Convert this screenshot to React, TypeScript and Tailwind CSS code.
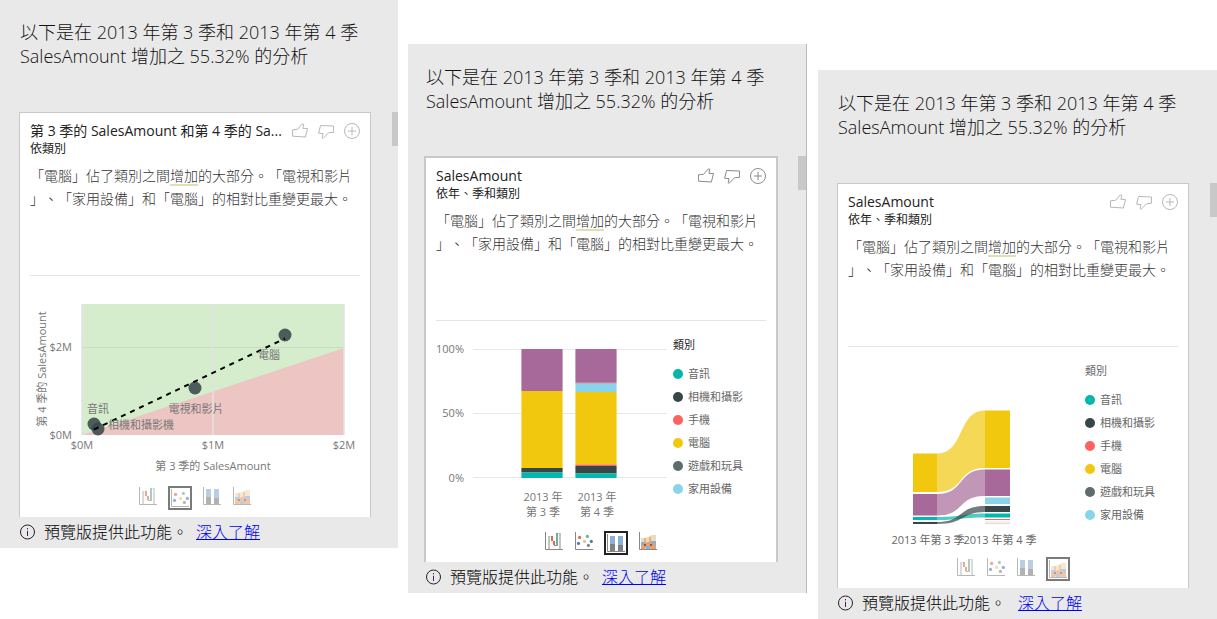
import type { ReactNode } from "react";

type ChartKind = "waterfall" | "scatter" | "stacked" | "ribbon";

const chartKinds: { kind: ChartKind; label: string }[] = [
  { kind: "waterfall", label: "瀑布圖" },
  { kind: "scatter", label: "散佈圖" },
  { kind: "stacked", label: "100% 堆疊直條圖" },
  { kind: "ribbon", label: "功能區圖表" },
];

const categories = [
  { name: "音訊", dot: "bg-[#01b8aa]" },
  { name: "相機和攝影", dot: "bg-[#374649]" },
  { name: "手機", dot: "bg-[#fd625e]" },
  { name: "電腦", dot: "bg-[#f2c80f]" },
  { name: "遊戲和玩具", dot: "bg-[#5f6b6d]" },
  { name: "家用設備", dot: "bg-[#8ad4eb]" },
];

function ThumbUpIcon() {
  return (
    <svg width="16" height="16" viewBox="0 0 16 16" fill="none" stroke="#8a8a8a">
      <path d="M.5 6.8 5.6 6.3 10.2.9 11.8 1.2 10.9 5.3 15.5 5.6 13.4 14 .6 13.2Z" />
    </svg>
  );
}

function ThumbDownIcon() {
  return (
    <svg width="16" height="16" viewBox="0 0 16 16" fill="none" stroke="#8a8a8a">
      <path d="M2.6 2.5 15.5 3 15.4 9.4 10.6 9.7 5.2 15.3 4.2 14.7 5 10.6.6 10.2Z" />
    </svg>
  );
}

function AddIcon() {
  return (
    <svg width="16" height="16" viewBox="0 0 16 16" fill="none" stroke="#8a8a8a">
      <circle cx="8" cy="8" r="7.5" />
      <path d="M8 4v8M4 8h8" />
    </svg>
  );
}

function InfoIcon() {
  return (
    <svg width="16" height="16" viewBox="0 0 16 16" fill="none" stroke="#222">
      <circle cx="7.5" cy="8" r="7" />
      <path d="M7.5 6.8V12M7.5 4v1.4" stroke="#4a1a5c" />
    </svg>
  );
}

function ChartIcon({ kind }: { kind: ChartKind }) {
  return (
    <svg width="18" height="18" viewBox="0 0 18 18">
      {kind === "waterfall" && (
        <>
          <path d="M3 4h2v13H3zM14 1h2v16h-2z" fill="#c4c4c4" />
          <path d="M5 4h2v.6H5zM13 1h2v.8h-2z" fill="#c4c4c4" />
          <path d="M6 4h2v5h2v4h1v1H9v-1H8V9H6z" fill="#dd6b50" />
          <path d="M11 1h2v13h-2z" fill="#73ad9b" />
        </>
      )}
      {kind === "scatter" && (
        <>
          <circle cx="4.6" cy="5.4" r="1.6" fill="#dd6b50" />
          <circle cx="12.4" cy="4.4" r="1.6" fill="#73ad9b" />
          <circle cx="9.5" cy="9.4" r="1.6" fill="#eac282" />
          <circle cx="3.5" cy="11.4" r="1.6" fill="#4a7ebf" />
          <circle cx="16.3" cy="9.4" r="1.6" fill="#4a7ebf" />
          <circle cx="13.4" cy="13.4" r="1.6" fill="#858585" />
        </>
      )}
      {kind === "stacked" && (
        <>
          <path d="M3 2h5v8H3zM11 2h5v9h-5z" fill="#8cafd5" />
          <path d="M3 10h5v7H3zM11 11h5v6h-5z" fill="#808080" />
        </>
      )}
      {kind === "ribbon" && (
        <>
          <path d="M2 6h4l3-1 4-2h4v7H2z" fill="#f1dab8" />
          <path d="M5 6h2v5H5zM10 5h2v5h-2z" fill="#dcb489" />
          <path d="M2 10h4l3 3 3-4h5v4h-3l-3 4H8l-3-4H2z" fill="#8cafd5" />
          <path d="M2 13h3l3-3h4l2 3h3v4h-5l-3-3-3 3H2z" fill="#ec9f68" />
          <path d="M5 12h2v2H5zM11 12h2v2h-2z" fill="#8c5648" />
          <path d="M7 14h4v3H7z" fill="#8cafd5" />
        </>
      )}
      <path d="M.5 0v17.5H18" fill="none" stroke="#888" />
    </svg>
  );
}

function ScatterChart() {
  return (
    <svg width="330" height="210" viewBox="0 0 330 210" className="block text-[11px]" fill="#777">
      <rect x="52" y="28" width="262" height="131" fill="#d6edcd" />
      <path d="M52 159 314 72V159Z" fill="#edc6c3" />
      <path d="M52 71.5H314" stroke="#c5dcbf" />
      <path d="M52 28v131M183 28v131M314 28v131" stroke="#e2e2e2" strokeWidth="1.5" />
      <g fill="#374649" fillOpacity=".87">
        <circle cx="255" cy="59" r="6.5" />
        <circle cx="165" cy="112" r="6.5" />
        <circle cx="64" cy="148" r="6.5" />
        <circle cx="68" cy="153" r="6.5" />
      </g>
      <path d="M64 153.5 255 62.5" stroke="#000" strokeWidth="2" strokeDasharray="5 5" />
      <g textAnchor="middle">
        <text x="239" y="83">電腦</text>
        <text x="166" y="137">電視和影片</text>
        <text x="68" y="137">音訊</text>
        <text x="111" y="153">相機和攝影機</text>
        <text x="52" y="173">$0M</text>
        <text x="183" y="173">$1M</text>
        <text x="314" y="173">$2M</text>
        <text x="183" y="194">第 3 季的 SalesAmount</text>
        <text transform="translate(16 93) rotate(-90)">第 4 季的 SalesAmount</text>
      </g>
      <g textAnchor="end">
        <text x="42" y="75">$2M</text>
        <text x="42" y="163">$0M</text>
      </g>
    </svg>
  );
}

function StackedChart() {
  return (
    <svg width="232" height="210" viewBox="0 0 232 210" className="block shrink-0 text-[11px]" fill="#777">
      <path d="M37 28.5H231M37 92.5H231M37 156.5H231" stroke="#e8e8e8" />
      <g>
        <rect x="85" y="28" width="42" height="42" fill="#a66999" />
        <rect x="85" y="70" width="42" height="77" fill="#f2c80f" />
        <rect x="85" y="147" width="42" height="4.5" fill="#374649" />
        <rect x="85" y="151.5" width="42" height="5.5" fill="#01b8aa" />
      </g>
      <g>
        <rect x="139" y="28" width="42" height="34" fill="#a66999" />
        <rect x="139" y="62" width="42" height="9" fill="#8ad4eb" />
        <rect x="139" y="61.5" width="42" height="1" fill="#d89aa8" />
        <rect x="139" y="71" width="42" height="72.5" fill="#f2c80f" />
        <rect x="139" y="143.5" width="42" height="1.5" fill="#fd625e" />
        <rect x="139" y="145" width="42" height="7.5" fill="#374649" />
        <rect x="139" y="152.5" width="42" height="4.5" fill="#01b8aa" />
      </g>
      <path d="M85.5 28v129M126.5 28v129M139.5 28v129M180.5 28v129" stroke="#fff" strokeOpacity=".4" />
      <g textAnchor="end">
        <text x="28" y="32">100%</text>
        <text x="28" y="96">50%</text>
        <text x="28" y="161">0%</text>
      </g>
      <g textAnchor="middle">
        <text x="107" y="180">2013 年</text>
        <text x="107" y="195">第 3 季</text>
        <text x="161" y="180">2013 年</text>
        <text x="161" y="195">第 4 季</text>
      </g>
    </svg>
  );
}

function RibbonChart() {
  return (
    <svg width="232" height="210" viewBox="0 0 232 210" className="block shrink-0 text-[11px]" fill="#666">
      <g fillOpacity=".7">
        <path d="M89 106.5C117 106.5 109 63.5 137 63.5V121C109 121 117 145 89 145Z" fill="#f2c80f" />
        <path d="M89 147C117 147 109 122.5 137 122.5V149C109 149 117 168.5 89 168.5Z" fill="#a66999" />
        <path d="M89 170C113 170 113 166.5 137 166.5V170.5C113 170.5 113 173 89 173Z" fill="#01b8aa" />
        <path d="M89 175C117 175 109 159 137 159V165C113 165 117 177 89 177Z" fill="#374649" />
      </g>
      <rect x="65" y="106.5" width="24" height="38.5" fill="#f2c80f" />
      <rect x="65" y="147" width="24" height="21.5" fill="#a66999" />
      <rect x="65" y="170" width="24" height="3" fill="#01b8aa" />
      <rect x="65" y="175" width="24" height="2" fill="#374649" />
      <rect x="137" y="63.5" width="25" height="57.5" fill="#f2c80f" />
      <rect x="137" y="122.5" width="25" height="26.5" fill="#a66999" />
      <rect x="137" y="150.5" width="25" height="6.5" fill="#8ad4eb" />
      <rect x="137" y="159" width="25" height="6" fill="#374649" />
      <rect x="137" y="166.5" width="25" height="4" fill="#01b8aa" />
      <rect x="137" y="172" width="25" height="1" fill="#fd625e" />
      <rect x="137" y="174" width="25" height="2" fill="#fbeee8" />
      <rect x="137" y="176" width="25" height="1" fill="#dcdcdc" />
      <g textAnchor="middle">
        <text x="80" y="197">2013 年第 3 季</text>
        <text x="152" y="197">2013 年第 4 季</text>
      </g>
    </svg>
  );
}

function Legend({ titleClass }: { titleClass: string }) {
  return (
    <div className="pt-[15px] pl-[5px] text-[11px]">
      <p className={`leading-[18px] ${titleClass}`}>類別</p>
      <ul className="mt-2 text-[#666]">
        {categories.map((category) => (
          <li key={category.name} className="flex items-center gap-[5px] leading-[23px]">
            <span className={`size-[10px] rounded-full ${category.dot}`} />
            {category.name}
          </li>
        ))}
      </ul>
    </div>
  );
}

interface AnalysisPanelProps {
  title: string;
  subtitle: string;
  selected: ChartKind;
  panelClass: string;
  headingClass: string;
  bodyClass: string;
  cardClass: string;
  thumbClass: string;
  footerClass: string;
  linkClass: string;
  active?: boolean;
  children: ReactNode;
}

function AnalysisPanel({
  title,
  subtitle,
  selected,
  panelClass,
  headingClass,
  bodyClass,
  cardClass,
  thumbClass,
  footerClass,
  linkClass,
  active = false,
  children,
}: AnalysisPanelProps) {
  return (
    <section className={`bg-[#e9e9e9] ${panelClass}`}>
      <h2 className={`text-[18px] leading-6 font-light text-[#111] ${headingClass}`}>
        以下是在 2013 年第 3 季和 2013 年第 4 季
        <br />
        SalesAmount 增加之 55.32% 的分析
      </h2>
      <div className={`flex items-start ${bodyClass}`}>
        <article className={`min-w-0 flex-1 border-[#c8c8c8] bg-white px-[10px] pt-[7px] pb-[7px] ${cardClass}`}>
          <header className="flex items-start justify-between whitespace-nowrap">
            <div>
              <h3 className="text-[14px] leading-[22px] text-[#222]">{title}</h3>
              <p className="text-[12px] leading-[14px] text-[#222]">{subtitle}</p>
            </div>
            <div className={`flex gap-[10px] pt-[3px] ${active ? "" : "opacity-60"}`}>
              <button type="button" aria-label="讚">
                <ThumbUpIcon />
              </button>
              <button type="button" aria-label="不讚">
                <ThumbDownIcon />
              </button>
              <button type="button" aria-label="新增至報表">
                <AddIcon />
              </button>
            </div>
          </header>
          <p className="mt-2 h-[111px] text-[14px] leading-[23px] font-light whitespace-nowrap text-[#333] [text-spacing-trim:space-all]">
            「電腦」佔了類別之間
            <span className="underline decoration-[#dedfb4] decoration-2 underline-offset-3 [text-decoration-skip-ink:none]">
              增加
            </span>
            的大部分。「電視和影片
            <br />
            」、「家用設備」和「電腦」的相對比重變更最大。
          </p>
          <div className="flex h-[211px] border-t border-[#e4e4e4]">{children}</div>
          <div className={`flex h-6 items-start justify-center ${active ? "" : "opacity-60"}`}>
            {chartKinds.map(({ kind, label }) => (
              <button
                key={kind}
                type="button"
                aria-label={label}
                aria-pressed={kind === selected}
                className={kind === selected ? "mx-[5px] border-2 border-[#222] p-px" : "mx-[6px] mt-px"}
              >
                <ChartIcon kind={kind} />
              </button>
            ))}
          </div>
        </article>
        <div className={`h-[34px] bg-[#c8c8c8] ${thumbClass}`} />
      </div>
      <footer className={`flex h-[31px] items-center pb-px text-[16px] font-light text-black ${footerClass}`}>
        <InfoIcon />
        <span className="ml-2">預覽版提供此功能。</span>
        <a href="#" className={`text-[#0000ee] underline ${linkClass}`}>
          深入了解
        </a>
      </footer>
    </section>
  );
}

export default function App() {
  return (
    <main
      lang="zh-Hant"
      className="grid grid-cols-[398fr_399fr_400fr] items-start gap-x-[10px] bg-white font-['Open_Sans','Noto_Sans_CJK_TC',sans-serif]"
    >
      <AnalysisPanel
        title="第 3 季的 SalesAmount 和第 4 季的 Sa..."
        subtitle="依類別"
        selected="scatter"
        panelClass=""
        headingClass="h-[112px] pt-5 pl-5"
        bodyClass="gap-[21px] pl-[19px]"
        cardClass="border-x border-t"
        thumbClass="w-[6px]"
        footerClass="pl-5"
        linkClass="ml-2"
      >
        <ScatterChart />
      </AnalysisPanel>
      <AnalysisPanel
        title="SalesAmount"
        subtitle="依年、季和類別"
        selected="stacked"
        panelClass="mt-[44px] border-r border-[#b8b8b8]"
        headingClass="h-[112px] pt-[21px] pl-[18px]"
        bodyClass="gap-5 pl-4"
        cardClass="border-x-2 border-t-2"
        thumbClass="w-2"
        footerClass="pl-[18px]"
        linkClass="ml-2"
        active
      >
        <StackedChart />
        <Legend titleClass="text-[#222]" />
      </AnalysisPanel>
      <AnalysisPanel
        title="SalesAmount"
        subtitle="依年、季和類別"
        selected="ribbon"
        panelClass="mt-[70px] ml-px"
        headingClass="h-[113px] pt-[21px] pl-5"
        bodyClass="gap-[21px] pl-[19px]"
        cardClass="border-x border-t"
        thumbClass="w-[7px]"
        footerClass="pl-5"
        linkClass="ml-3"
      >
        <RibbonChart />
        <Legend titleClass="text-[#666]" />
      </AnalysisPanel>
    </main>
  );
}
